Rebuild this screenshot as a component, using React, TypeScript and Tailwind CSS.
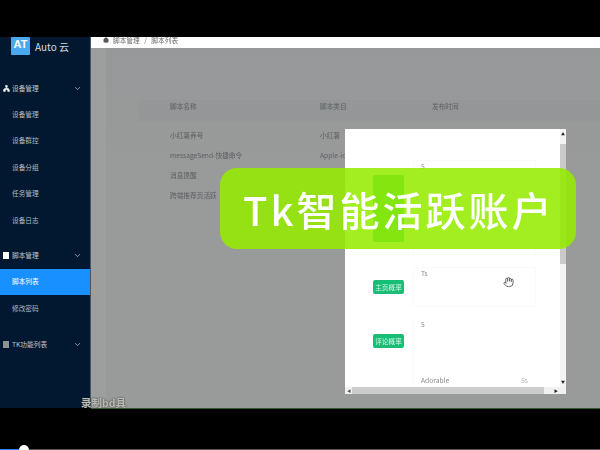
import { ChevronDown, Hand, Network, Home } from 'lucide-react';

const cjk = '[font-family:"Noto_Sans_CJK_SC","Liberation_Sans",sans-serif]';

function SubItem({ label, active }: { label: string; active?: boolean }) {
  return (
    <div className={active ? 'h-[26.5px] flex items-center pl-3 bg-[#1890ff] text-white' : 'h-[26.5px] flex items-center pl-3 text-[#b4bcc4]'}>
      <span className="text-[6.7px] leading-none">{label}</span>
    </div>
  );
}

function GroupHead({ label, icon }: { label: string; icon: React.ReactNode }) {
  return (
    <div className="h-[26px] flex items-center pl-[3px] pr-[8px] text-[#c0c6cc]">
      <span className="w-[9px] flex justify-start">{icon}</span>
      <span className="text-[6.7px] leading-none flex-1">{label}</span>
      <ChevronDown className="w-[9px] h-[9px] text-[#b8c0c8]" strokeWidth={2} />
    </div>
  );
}

function Row({ name, kind }: { name: string; kind: string }) {
  return (
    <div className="h-5 flex items-center text-[6.7px] text-[#5c6063]">
      <span className="w-[150px] leading-none whitespace-nowrap">{name}</span>
      <span className="leading-none whitespace-nowrap">{kind}</span>
    </div>
  );
}

function Tag({ label }: { label: string }) {
  return (
    <div className="w-[31px] h-[14px] rounded-[2px] bg-[#19bd76] text-[#d8f5e6] text-[6.7px] leading-[14px] text-center whitespace-nowrap">
      {label}
    </div>
  );
}

export default function App() {
  return (
    <div className={`relative w-[600px] h-[450px] overflow-hidden bg-black ${cjk}`}>
      <div className="pt-[37px]">
        <div className="flex h-[371px] blur-[0.4px]">
          <aside className="w-[91px] shrink-0 bg-[#011830] border-r border-[#4a5660] flex flex-col">
            <div className="h-[38px] flex items-start pl-[11px]">
              <div className="w-[19px] h-[18px] rounded-[1px] bg-[#4aa8ee] text-white text-[11px] font-bold leading-[14px] text-center [font-family:'Liberation_Sans',sans-serif]">AT</div>
              <span className="ml-[5px] mt-[3px] text-[10px] leading-[13px] text-[#d5dade] whitespace-nowrap">Auto 云</span>
            </div>
            <GroupHead label="设备管理" icon={<Network className="w-[7px] h-[7px] text-white fill-white" />} />
            <SubItem label="设备管理" />
            <SubItem label="设备群控" />
            <SubItem label="设备分组" />
            <SubItem label="任务管理" />
            <SubItem label="设备日志" />
            <div className="h-[9px]" />
            <GroupHead label="脚本管理" icon={<span className="block w-[6px] h-[7px] bg-white" />} />
            <SubItem label="脚本列表" active />
            <SubItem label="修改密码" />
            <div className="h-[9.5px]" />
            <GroupHead label="TK功能列表" icon={<span className="block w-[6px] h-[7px] bg-[#8f9294]" />} />
          </aside>
          <main className="flex-1 bg-[#9d9e9e] flex flex-col min-w-0">
            <div className="h-[11px] bg-white flex items-start pl-[12px] text-[6.7px] text-[#6a6a6a]">
              <Home className="w-[6px] h-[6px] mr-[4px] fill-[#555]" />
              <span className="leading-[7px] whitespace-nowrap">脚本管理&nbsp;&nbsp;&nbsp;/&nbsp;&nbsp;&nbsp;脚本列表</span>
            </div>
            <div className="flex-1 ml-[15px] pt-[52px] pl-[64px] bg-gradient-to-b from-[#969899] to-[#999a9a] to-30%">
              <div className="-ml-[32px] pl-[32px] pt-[3px] h-[22px] mb-[3px] bg-[#949697] flex items-start text-[6.7px] text-[#5c6063]">
                <span className="w-[150px] leading-[7px]">脚本名称</span>
                <span className="w-[112px] leading-[7px]">脚本类目</span>
                <span className="leading-[7px]">发布时间</span>
              </div>
              <Row name="小红薯养号" kind="小红薯" />
              <Row name="messageSend-快捷命令" kind="Apple-ios" />
              <Row name="消息提醒" kind="" />
              <Row name="跨端推荐页活跃" kind="" />
            </div>
          </main>
        </div>
      </div>

      {/* modal */}
      <div className="absolute left-[345px] top-[129px] w-[221px] h-[265px] bg-white flex flex-col blur-[0.3px]">
        <div className="flex flex-1 min-h-0">
          <div className="flex-1 min-w-0 overflow-hidden pt-[31px] pl-[28px] pr-[24px] flex flex-col gap-[12px]">
            <div className="flex gap-[9px] shrink-0">
              <div className="w-[31px] h-[67px] mt-[15px] rounded-[2px] bg-[#19bd76]" />
              <div className="flex-1 h-[95px] pl-[7px] text-[6.7px] leading-[10px] text-[#8a8a8a] border border-[#fafafa]">5</div>
            </div>
            <div className="flex gap-[9px] shrink-0">
              <div className="mt-[13px]"><Tag label="主页概率" /></div>
              <div className="flex-1 h-[40px] pl-[7px] text-[6.7px] leading-[10px] text-[#8a8a8a] border border-[#fafafa]">Ts</div>
            </div>
            <div className="flex gap-[9px] shrink-0">
              <div className="mt-[15px]"><Tag label="评论概率" /></div>
              <div className="flex-1 h-[66px] pl-[7px] pr-[8px] text-[6.7px] leading-[10px] text-[#8a8a8a] border-l border-[#fafafa] flex flex-col justify-between">
                <span>5</span>
                <span className="flex justify-between">
                  <span>Adorable</span>
                  <span className="text-[#b0b0b0]">5s</span>
                </span>
              </div>
            </div>
          </div>
          <div className="w-[6px] shrink-0 bg-[#f4f4f4] flex flex-col items-center">
            <span className="h-[15px] pt-[3px] text-[4px] leading-none text-[#222]">▲</span>
            <div className="w-full h-[120px] bg-[#cacaca]" />
            <div className="flex-1" />
            <span className="pb-[3px] text-[4px] leading-none text-[#222]">▼</span>
          </div>
        </div>
        <div className="h-[7px] shrink-0 bg-[#f1f1f1] flex items-center">
          <span className="w-[7px] pl-[2px] text-[4px] leading-none text-[#555]">◀</span>
          <div className="w-[192px] h-full bg-[#cccccc]" />
          <div className="flex-1" />
          <span className="w-[12px] text-[4px] leading-none text-[#222]">▶</span>
        </div>
      </div>

      {/* cursor */}
      <Hand className="absolute left-[503px] top-[276px] w-[11px] h-[12px] text-[#555]" strokeWidth={2} />

      {/* banner */}
      <div className="absolute left-[220px] top-[168px] w-[356px] h-[81px] rounded-[17px] bg-[#94eb00]/87 flex items-center pl-[23px] text-white text-[40px] font-medium tracking-[3px] whitespace-nowrap">
        Tk智能活跃账户
      </div>

      {/* watermark */}
      <span className="absolute left-[81px] top-[396px] text-[10.5px] leading-[13px] font-bold text-[#bcbcb4] [text-shadow:0_0_2px_#2c2c2c] whitespace-nowrap">录制bd具</span>

      <div className="absolute left-[91px] top-[408px] w-[509px] h-px bg-[#2f5d2f]" />

      {/* video progress */}
      <div className="absolute left-0 top-[449px] w-full h-px bg-[#555]" />
      <div className="absolute left-0 top-[449px] w-[20px] h-px bg-[#2a7fff]" />
      <div className="absolute left-[19px] top-[445px] w-[10px] h-[10px] rounded-full bg-white" />
    </div>
  );
}
